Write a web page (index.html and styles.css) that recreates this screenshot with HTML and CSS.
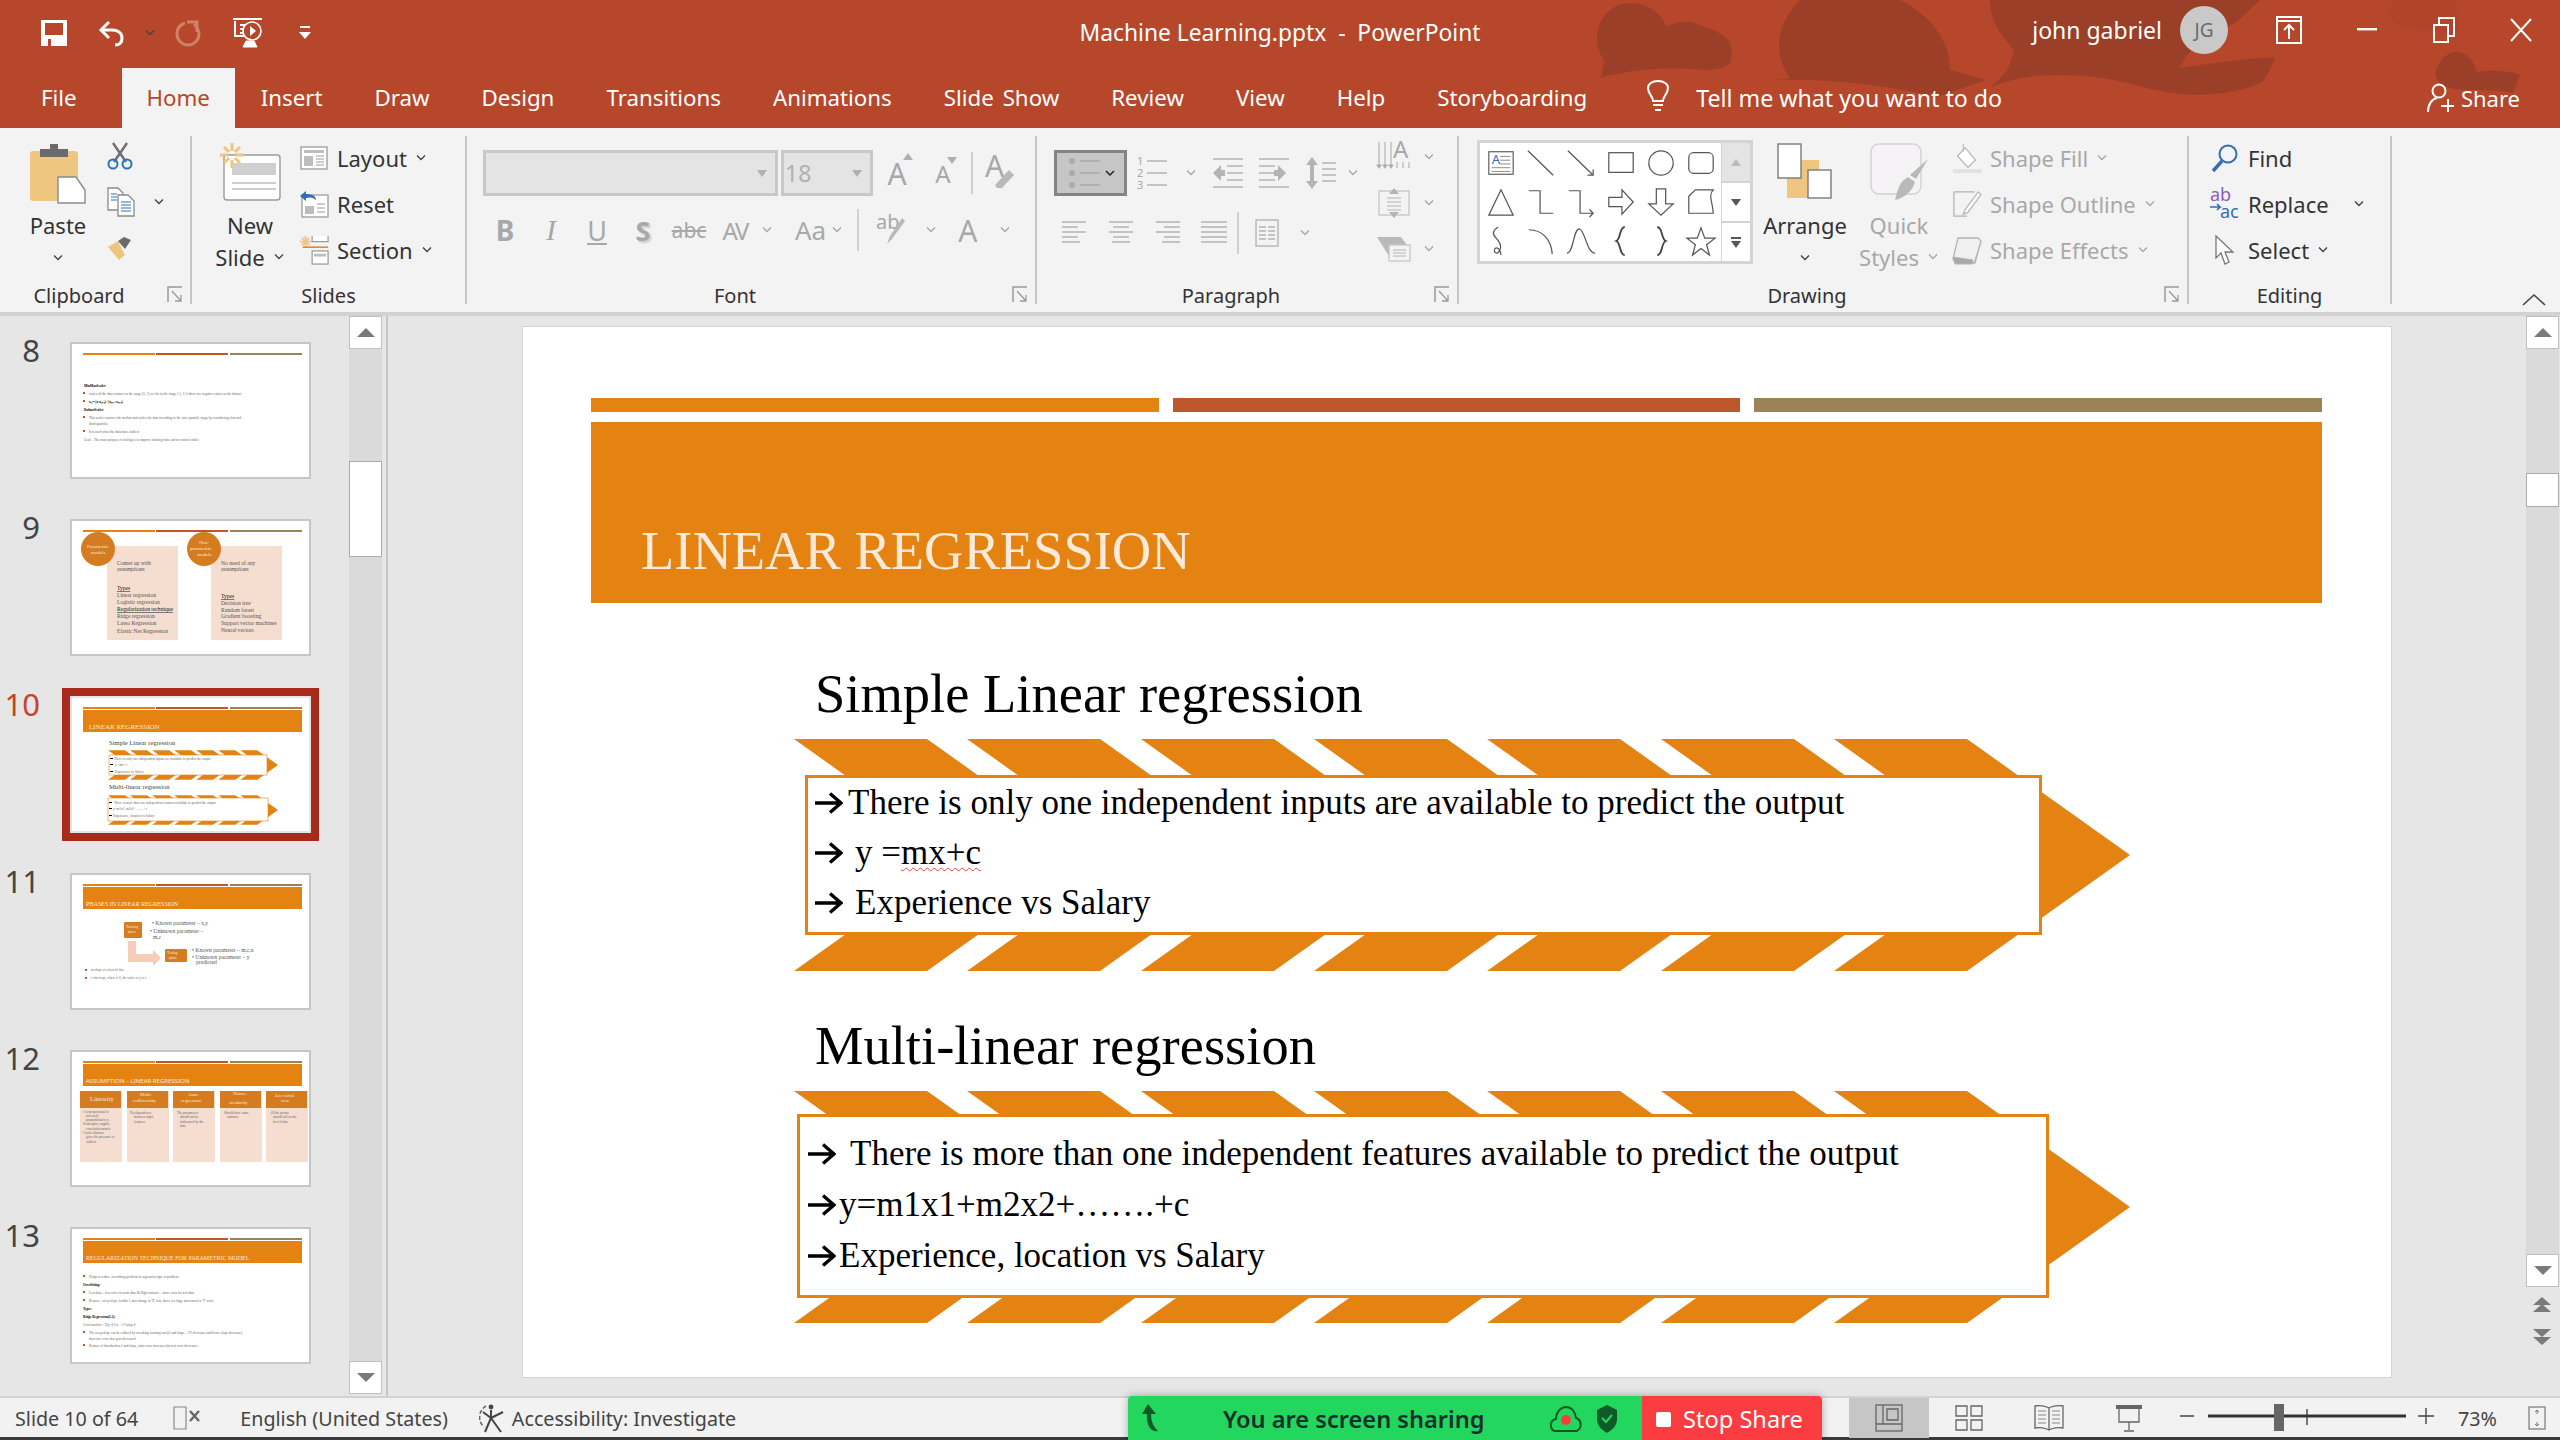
FILE: index.html
```html
<!DOCTYPE html>
<html lang="en">
<head>
  <meta charset="UTF-8">
  <title>Machine Learning.pptx - PowerPoint</title>
  <link rel="stylesheet" href="styles.css">
</head>
<body>
<svg class="defs">
  <symbol id="caret" viewBox="0 0 12 8"><path d="M2 1.5l4 4 4-4" fill="none" stroke="currentColor" stroke-width="1.4"/></symbol>
  <symbol id="launcher" viewBox="0 0 16 18"><path d="M1 16V1h14" fill="none" stroke="#9a9a9a" stroke-width="1.5"/><path d="M5 5l9 10M14 9v6H8" fill="none" stroke="#9a9a9a" stroke-width="1.3"/></symbol>
  <symbol id="chevrons" viewBox="0 0 1336 232">
    <g fill="#e48312">
      <path d="M0 0h133l163 116-163 116H0l163-116z"/>
      <path d="M173 0h133l163 116-163 116H173l163-116z"/>
      <path d="M347 0h133l163 116-163 116H347l163-116z"/>
      <path d="M520 0h133l163 116-163 116H520l163-116z"/>
      <path d="M693 0h133l163 116-163 116H693l163-116z"/>
      <path d="M867 0h133l163 116-163 116H867l163-116z"/>
      <path d="M1040 0h133l163 116-163 116h-133l163-116z"/>
    </g>
  </symbol>
  <symbol id="accents" viewBox="0 0 237 4">
    <path d="M11 0h72v2H11z" fill="#e48312"/><path d="M84 0h72v2H84z" fill="#bd582c"/><path d="M158 0h72v2h-72z" fill="#9b8357"/>
  </symbol>
  <symbol id="sarrow" viewBox="0 0 28 22"><path d="M0 11h24M15 1.5L26 11 15 20.5" fill="none" stroke="#000" stroke-width="3.4"/></symbol>
</svg>

<header class="titlebar">
  <svg class="art" viewBox="0 0 2560 128">
    <g fill="#9c3f28">
      <path d="M1597 40c-1-20 14-38 35-37 17 1 29 10 35 24 10-6 24-7 32-2 16 4 28 12 31 18 2 8 2 14 0 20-6 5-14 7-24 7-20-2-44-2-64 0-14 2-28 4-42 8 2-6 4-12 4-18-4-6-7-12-7-20z"/>
      <path d="M1800 0c-20 20-30 50-10 78l-21 2c60-2 120 5 168 17l49-17-36-10c0-30-20-55-50-70z"/>
      <path d="M1990 0c0 20 10 34 24 50-2 8-4 14-7 20-4 6-10 12-17 17 22-8 44-12 66-12 24 0 48 2 71 8 24 6 46 12 70 12 28-1 58-6 67-15 5-8 9-16 11-23-32 2-64 6-96 11 6-10 12-18 18-25 14-8 30-14 42-23l21-20z"/>
      <path d="M2435 73c3-10 10-21 21-21 12 0 18 10 21 20 14-2 32-2 43 3l-7 18c-16-3-34-3-50-3-10-1-18-3-24-7z"/>
      <path d="M2386 10c4-4 6-7 8-10h60c4 12 6 24 4 32-8 6-18 2-28-2-14 0-28 0-36-8z" opacity=".18"/>
    </g>
  </svg>
  <div class="title-row">
    <div class="qat">
      <svg class="qat-save" width="26" height="26" viewBox="0 0 26 26"><path d="M0 0h26v26H0z" fill="#fff"/><path d="M4 3h18v12H4zM7 19h3v7H7z" fill="#b7472a"/></svg>
      <svg class="qat-undo" width="28" height="28" viewBox="0 0 28 28"><path d="M11 3L3 11l8 8" fill="none" stroke="#fff" stroke-width="3"/><path d="M4 11h10c6 0 10 3 10 8s-3 7-7 7" fill="none" stroke="#fff" stroke-width="3"/></svg>
      <svg class="caret qat-caret"><use href="#caret"/></svg>
      <svg class="qat-redo" width="28" height="28" viewBox="0 0 28 28"><path d="M11 4C5 6 3 11 3 15c0 6 5 11 11 11s11-5 11-11c0-4-2-7-5-10" fill="none" stroke="#d2806a" stroke-width="3"/><path d="M13 3h10v10" fill="none" stroke="#d2806a" stroke-width="3"/></svg>
      <svg class="qat-show" width="30" height="30" viewBox="0 0 30 30"><path d="M0 1h29M2 3v15h12M7 7h6M7 11h6M7 15h5" fill="none" stroke="#fff" stroke-width="2"/><circle cx="19" cy="13" r="9" fill="#b7472a" stroke="#fff" stroke-width="1.6"/><path d="M17 8l6 5-6 5z" fill="#fff"/><path d="M10 29h14l-3-6h-8zM17 20v5" fill="#fff" stroke="#fff"/></svg>
      <svg class="qat-more" width="12" height="14" viewBox="0 0 12 14"><path d="M1 0h10v2H1zM0 6h12l-6 7z" fill="#fff"/></svg>
    </div>
    <div class="doc-title">Machine Learning.pptx&nbsp; -&nbsp; PowerPoint</div>
    <div class="account">
      <span class="user">john gabriel</span>
      <span class="avatar">JG</span>
      <svg class="win win-ribbon" width="26" height="28" viewBox="0 0 26 28"><path d="M1 1h24v26H1zM1 5h24" fill="none" stroke="#fff" stroke-width="2"/><path d="M13 23V10M8 14l5-5 5 5" fill="none" stroke="#fff" stroke-width="2"/></svg>
      <svg class="win win-min" width="20" height="4" viewBox="0 0 20 4"><path d="M0 0h20v2.4H0z" fill="#fff"/></svg>
      <svg class="win win-max" width="22" height="26" viewBox="0 0 22 26"><path d="M1 8h14v17H1z" fill="none" stroke="#fff" stroke-width="2"/><path d="M6 7V1h15v18h-5" fill="none" stroke="#fff" stroke-width="2"/></svg>
      <svg class="win win-close" width="22" height="24" viewBox="0 0 22 24"><path d="M1 1l20 22M21 1L1 23" fill="none" stroke="#fff" stroke-width="2"/></svg>
    </div>
  </div>
  <nav class="tabs">
    <span class="tab tab-file">File</span>
    <span class="tab active">Home</span>
    <span class="tab">Insert</span>
    <span class="tab">Draw</span>
    <span class="tab">Design</span>
    <span class="tab">Transitions</span>
    <span class="tab">Animations</span>
    <span class="tab tab-show">Slide Show</span>
    <span class="tab">Review</span>
    <span class="tab">View</span>
    <span class="tab">Help</span>
    <span class="tab">Storyboarding</span>
    <svg class="bulb" width="24" height="32" viewBox="0 0 24 32"><path d="M7 21c0-5-5-7-5-13C2 4 6 1 12 1s10 3 10 7c0 6-5 8-5 13z" fill="none" stroke="#fff" stroke-width="2"/><path d="M7 24h10v2H7zM9 29h6v2H9z" fill="#fff"/></svg>
    <span class="tell">Tell me what you want to do</span>
    <span class="share">
      <svg width="28" height="30" viewBox="0 0 28 30"><circle cx="12" cy="8" r="6.5" fill="none" stroke="#fff" stroke-width="2"/><path d="M1 29c0-8 4-13 9-14" fill="none" stroke="#fff" stroke-width="2"/><path d="M14 23h13M21 16v13" stroke="#fff" stroke-width="2"/></svg>
      Share
    </span>
  </nav>
</header>

<section class="ribbon">
  <div class="group g-clipboard">
    <div class="group-body">
      <div class="large paste">
        <div class="large-icon">
          <svg width="56" height="60" viewBox="0 0 56 60"><rect x="0" y="8" width="48" height="50" rx="3" fill="#efc67f"/><path d="M10 14V6h10V1h8v5h10v8z" fill="#6b6b6b"/><path d="M28 34h18l9 13v13H28z" fill="#fff" stroke="#8a8a8a" stroke-width="1.4"/></svg>
        </div>
        <span>Paste</span>
        <svg class="caret"><use href="#caret"/></svg>
      </div>
      <div class="stack clip-tools">
        <div class="row">
          <svg width="26" height="28" viewBox="0 0 26 28"><path d="M6 1l13 19M20 1L7 20" stroke="#6e6e6e" stroke-width="2.4"/><circle cx="6" cy="22" r="4.5" fill="none" stroke="#2b73b8" stroke-width="2"/><circle cx="20" cy="22" r="4.5" fill="none" stroke="#2b73b8" stroke-width="2"/></svg>
        </div>
        <div class="row">
          <svg width="28" height="30" viewBox="0 0 28 30"><path d="M1 1h10l5 5v17H1z" fill="#fff" stroke="#8a8a8a" stroke-width="1.3"/><path d="M11 8h10l6 6v15H11z" fill="#fff" stroke="#8a8a8a" stroke-width="1.3"/><path d="M14 15h10M14 18h10M14 21h10M14 24h10M4 7h6M4 10h6M4 13h6" stroke="#2b73b8" stroke-width="1.2"/></svg>
          <svg class="caret clip-caret"><use href="#caret"/></svg>
        </div>
        <div class="row">
          <svg width="26" height="24" viewBox="0 0 26 24"><path d="M1 11l10-6 7 14-6 5z" fill="#efc67f"/><path d="M11 5l6-4 7 3-6 9z" fill="#6b6b6b"/></svg>
        </div>
      </div>
    </div>
    <div class="group-label"><span>Clipboard</span><svg class="launcher"><use href="#launcher"/></svg></div>
  </div>

  <div class="group g-slides">
    <div class="group-body">
      <div class="large new-slide">
        <div class="large-icon">
          <svg width="62" height="58" viewBox="0 0 62 58"><rect x="5" y="12" width="56" height="45" rx="3" fill="#fff" stroke="#9a9a9a" stroke-width="1.4"/><path d="M13 20h44v12H13z" fill="#cfcfcf"/><path d="M13 40h44M13 46h44" stroke="#bdbdbd" stroke-width="1.4"/><g stroke="#efc67f" stroke-width="3"><path d="M13 0v8M13 17v8M1 12h8M17 12h8M5 4l5 5M21 4l-5 5M5 20l5-5M21 20l-5-5"/></g></svg>
        </div>
        <span>New</span>
        <span>Slide <svg class="caret"><use href="#caret"/></svg></span>
      </div>
      <div class="stack">
        <div class="row">
          <svg class="r-icon" width="28" height="24" viewBox="0 0 28 24"><rect x="1" y="1" width="26" height="22" fill="#fff" stroke="#9a9a9a" stroke-width="1.3"/><path d="M4 4h20v3H4zM4 10h9v10H4z" fill="#bdbdbd"/><path d="M16 10h8M16 13h8M16 16h8M16 19h8" stroke="#9a9a9a"/></svg>
          <span>Layout</span><svg class="caret"><use href="#caret"/></svg>
        </div>
        <div class="row">
          <svg class="r-icon" width="30" height="28" viewBox="0 0 30 28"><rect x="3" y="5" width="26" height="22" fill="#fff" stroke="#9a9a9a" stroke-width="1.3"/><path d="M6 16h9v8H6z" fill="#bdbdbd"/><path d="M18 14h8M18 18h8M18 22h8" stroke="#9a9a9a"/><path d="M1 6l6-5v3c6 0 10 2 10 6-3-3-6-3-10-2v3z" fill="#2f6fb3"/></svg>
          <span>Reset</span>
        </div>
        <div class="row">
          <svg class="r-icon" width="32" height="32" viewBox="0 0 32 32"><g stroke="#efc67f" stroke-width="2"><path d="M7 1v12M1 7h12M3 3l8 8M11 3l-8 8"/></g><path d="M14 1v6h17V1" fill="#fff" stroke="#9a9a9a" stroke-width="1.3"/><path d="M4 13h27" stroke="#e48312" stroke-width="1.6"/><rect x="14" y="17" width="17" height="14" fill="#fff" stroke="#9a9a9a" stroke-width="1.3"/><path d="M16 20h13v3H16z" fill="#bdbdbd"/></svg>
          <span>Section</span><svg class="caret"><use href="#caret"/></svg>
        </div>
      </div>
    </div>
    <div class="group-label plain"><span>Slides</span></div>
  </div>

  <div class="group g-font">
    <div class="group-body column">
      <div class="font-row1 disabled">
        <div class="combo combo-name"><i class="down"></i></div>
        <div class="combo combo-size">18<i class="down"></i></div>
        <span class="cell c48 grow">A<i class="up"></i></span>
        <span class="cell c48 shrink">A<i class="down small"></i></span>
        <span class="vsep short"></span>
        <svg class="eraser" width="30" height="32" viewBox="0 0 30 32"><text x="0" y="20" class="erase-a">A</text><path d="M10 28l14-15 5 5-12 13h-5z" fill="#b9b9b9"/></svg>
      </div>
      <div class="font-row2 disabled">
        <span class="cell c46 btn-b">B</span>
        <span class="cell c46 btn-i">I</span>
        <span class="cell c46 btn-u">U</span>
        <span class="cell c46 btn-s">S</span>
        <span class="cell c46 btn-abc">abc</span>
        <span class="cell c46 btn-av">AV</span>
        <svg class="caret c-av"><use href="#caret"/></svg>
        <span class="cell btn-aa">Aa</span>
        <svg class="caret c-aa"><use href="#caret"/></svg>
        <span class="vsep sep-aa"></span>
        <svg class="pen" width="30" height="30" viewBox="0 0 30 30"><text x="0" y="14" class="pen-ab">ab</text><path d="M14 21L26 3l3 3-13 18-5 5z" fill="#b9b9b9"/></svg>
        <svg class="caret c-pen"><use href="#caret"/></svg>
        <span class="cell btn-color">A</span>
        <svg class="caret c-color"><use href="#caret"/></svg>
      </div>
    </div>
    <div class="group-label"><span>Font</span><svg class="launcher"><use href="#launcher"/></svg></div>
  </div>

  <div class="group g-para">
    <div class="group-body">
      <div class="para-left disabled">
        <div class="para-row1">
          <div class="bullets"><svg width="46" height="34" viewBox="0 0 46 34"><g fill="#aaa"><circle cx="4" cy="5" r="3"/><circle cx="4" cy="17" r="3"/><circle cx="4" cy="29" r="3"/></g><path d="M12 5h20M12 17h20M12 29h20" stroke="#aaa" stroke-width="1.5"/><path d="M38 15l4 4 4-4" fill="none" stroke="#222" stroke-width="1.5"/></svg></div>
          <span class="cell"><svg width="30" height="34" viewBox="0 0 30 34"><path d="M10 5h20M10 17h20M10 29h20" stroke="#b4b4b4" stroke-width="1.5"/><text x="0" y="9" class="num">1</text><text x="0" y="21" class="num">2</text><text x="0" y="33" class="num">3</text></svg></span>
          <span class="cell"><svg class="caret"><use href="#caret"/></svg></span>
          <span class="cell"><svg width="30" height="32" viewBox="0 0 30 32"><path d="M0 2h30M14 9h16M14 16h16M14 23h16M0 30h30" stroke="#b4b4b4" stroke-width="1.5"/><path d="M0 16l8-8v5h4v6H8v5z" fill="#b4b4b4"/></svg></span>
          <span class="cell"><svg width="30" height="32" viewBox="0 0 30 32"><path d="M0 2h30M0 9h16M0 16h16M0 23h16M0 30h30" stroke="#b4b4b4" stroke-width="1.5"/><path d="M30 16l-8-8v5h-4v6h4v5z" transform="translate(-3)" fill="#b4b4b4"/></svg></span>
          <span class="cell"><svg width="30" height="32" viewBox="0 0 30 32"><path d="M6 0l6 8H8v16h4l-6 8-6-8h4V8H0z" fill="#b4b4b4"/><path d="M16 6h14M16 12h14M16 18h14M16 24h14" stroke="#b4b4b4" stroke-width="1.5"/></svg></span>
          <span class="cell"><svg class="caret"><use href="#caret"/></svg></span>
        </div>
        <div class="para-row2">
          <span class="cell"><svg width="26" height="24" viewBox="0 0 26 24"><path d="M0 1h24M0 6h16M0 11h24M0 16h16M0 21h18" stroke="#b4b4b4" stroke-width="1.5"/></svg></span>
          <span class="cell"><svg width="26" height="24" viewBox="0 0 26 24"><path d="M1 1h24M5 6h16M1 11h24M5 16h16M4 21h18" stroke="#b4b4b4" stroke-width="1.5"/></svg></span>
          <span class="cell"><svg width="26" height="24" viewBox="0 0 26 24"><path d="M2 1h24M10 6h16M2 11h24M10 16h16M8 21h18" stroke="#b4b4b4" stroke-width="1.5"/></svg></span>
          <span class="cell"><svg width="26" height="24" viewBox="0 0 26 24"><path d="M0 1h26M0 6h26M0 11h26M0 16h26M0 21h26" stroke="#b4b4b4" stroke-width="1.5"/></svg></span>
          <span class="vsep"></span>
          <span class="cell"><svg width="24" height="28" viewBox="0 0 24 28"><rect x="1" y="1" width="22" height="26" fill="none" stroke="#b4b4b4" stroke-width="1.4"/><path d="M4 8h7M13 8h7M4 12h7M13 12h7M4 16h7M13 16h7M4 20h7M13 20h7" stroke="#b4b4b4" stroke-width="1.3"/></svg></span>
          <span class="cell"><svg class="caret"><use href="#caret"/></svg></span>
        </div>
      </div>
      <div class="stack para-right disabled">
        <div class="row"><svg width="34" height="34" viewBox="0 0 34 34"><path d="M2 2v26M8 2v26M14 2v26M2 28l-2-3h4zM8 28l-2-3h4zM14 28l-2-3h4zM20 22v6M26 22v6M32 22v6" stroke="#b4b4b4" stroke-width="1.2"/><text x="16" y="18" class="big-a">A</text></svg><svg class="caret"><use href="#caret"/></svg></div>
        <div class="row"><svg width="34" height="32" viewBox="0 0 34 32"><rect x="2" y="4" width="30" height="24" fill="none" stroke="#c9c3d0" stroke-width="1.4"/><path d="M10 11h14M10 15h14M10 19h14M10 23h14" stroke="#b4b4b4"/><path d="M17 1l-5 6h10zM17 31l-5-6h10z" fill="#b4b4b4"/></svg><svg class="caret"><use href="#caret"/></svg></div>
        <div class="row"><svg width="34" height="26" viewBox="0 0 34 26"><path d="M0 1h24l6 8H14v14z" fill="#b9b9b9"/><rect x="12" y="9" width="21" height="16" fill="#f3f3f3" stroke="#c9c3d0" stroke-width="1.3"/><path d="M16 14h13M16 17h13M16 20h13" stroke="#b4b4b4"/></svg><svg class="caret"><use href="#caret"/></svg></div>
      </div>
    </div>
    <div class="group-label"><span>Paragraph</span><svg class="launcher"><use href="#launcher"/></svg></div>
  </div>

  <div class="group g-drawing">
    <div class="group-body">
      <div class="gallery">
        <div class="shapes">
          <svg viewBox="0 0 32 32"><rect x="3" y="4" width="26" height="24" fill="#fff" stroke="#555" stroke-width="1.2"/><text x="6" y="17" class="ga">A</text><path d="M15 9h11M15 13h11M15 17h11M6 21h20M6 25h20" stroke="#888"/></svg>
          <svg viewBox="0 0 32 32"><path d="M2 3l27 26" stroke="#555" stroke-width="1.3"/></svg>
          <svg viewBox="0 0 32 32"><path d="M2 3l26 25M23 29h6v-6" fill="none" stroke="#555" stroke-width="1.3"/></svg>
          <svg viewBox="0 0 32 32"><rect x="3" y="5" width="26" height="21" fill="none" stroke="#555" stroke-width="1.3"/></svg>
          <svg viewBox="0 0 32 32"><circle cx="16" cy="16" r="13" fill="none" stroke="#555" stroke-width="1.3"/></svg>
          <svg viewBox="0 0 32 32"><rect x="3" y="5" width="26" height="22" rx="5" fill="none" stroke="#555" stroke-width="1.3"/></svg>
          <svg viewBox="0 0 32 32"><path d="M16 3L3 30h26z" fill="none" stroke="#555" stroke-width="1.3"/></svg>
          <svg viewBox="0 0 32 32"><path d="M3 4h12v24h14" fill="none" stroke="#555" stroke-width="1.3"/></svg>
          <svg viewBox="0 0 32 32"><path d="M3 4h12v24h14M25 24l4 4-4 4" fill="none" stroke="#555" stroke-width="1.3"/></svg>
          <svg viewBox="0 0 32 32"><path d="M3 11h14V3l12 13-12 13v-8H3z" fill="none" stroke="#555" stroke-width="1.3"/></svg>
          <svg viewBox="0 0 32 32"><path d="M11 2h10v16h8L16 30 3 18h8z" fill="none" stroke="#555" stroke-width="1.3"/></svg>
          <svg viewBox="0 0 32 32"><path d="M10 3h19c-6 6 0 14 0 25H3V10z" fill="none" stroke="#555" stroke-width="1.3"/></svg>
          <svg viewBox="0 0 32 32"><path d="M13 1c-5 3-7 7-3 11s7 8 5 13-6 5-6 1 6-4 7 5" fill="none" stroke="#555" stroke-width="1.3"/></svg>
          <svg viewBox="0 0 32 32"><path d="M3 4c14 0 24 10 25 26" fill="none" stroke="#555" stroke-width="1.3"/></svg>
          <svg viewBox="0 0 32 32"><path d="M1 29C8 29 8 3 14 3s8 26 17 26" fill="none" stroke="#555" stroke-width="1.3"/></svg>
          <svg viewBox="0 0 32 32"><path d="M20 1c-6 0-4 13-9 15 5 2 3 15 9 15" fill="none" stroke="#444" stroke-width="2"/></svg>
          <svg viewBox="0 0 32 32"><path d="M12 1c6 0 4 13 9 15-5 2-3 15-9 15" fill="none" stroke="#444" stroke-width="2"/></svg>
          <svg viewBox="0 0 32 32"><path d="M16 2l4 11h11l-9 7 3 11-9-7-9 7 3-11-9-7h11z" fill="none" stroke="#555" stroke-width="1.3"/></svg>
        </div>
        <div class="gal-scroll">
          <div class="gal-btn off"><i class="up grey"></i></div>
          <div class="gal-btn"><i class="down dark"></i></div>
          <div class="gal-btn more"><b></b><i class="down dark"></i></div>
        </div>
      </div>
      <div class="large arrange">
        <div class="large-icon">
          <svg width="56" height="56" viewBox="0 0 56 56"><path d="M10 17h32v38H10z" fill="#efc67f"/><rect x="1" y="1" width="23" height="34" fill="#fff" stroke="#7a7a7a" stroke-width="1.4"/><rect x="31" y="27" width="23" height="28" fill="#fff" stroke="#7a7a7a" stroke-width="1.4"/></svg>
        </div>
        <span>Arrange</span>
        <svg class="caret"><use href="#caret"/></svg>
      </div>
      <div class="large quick disabled-text">
        <div class="large-icon">
          <svg width="58" height="58" viewBox="0 0 58 58"><rect x="1" y="1" width="50" height="50" rx="8" fill="#f6f3f7" stroke="#d4d0d6" stroke-width="1.4"/><path d="M58 16L46 36l-6-4z" fill="#b9b9b9"/><path d="M38 34l7 5c-2 8-10 16-20 18 2-6 3-18 13-23z" fill="#b9b9b9"/></svg>
        </div>
        <span>Quick</span>
        <span>Styles <svg class="caret"><use href="#caret"/></svg></span>
      </div>
      <div class="stack shape-tools disabled-text">
        <div class="row">
          <svg class="r-icon" width="32" height="32" viewBox="0 0 32 32"><path d="M6 14L14 5l11 13-8 8z" fill="#fff" stroke="#b4b4b4" stroke-width="1.3"/><path d="M12 1v8" stroke="#b4b4b4"/><path d="M1 28h31v4H1z" fill="#e2e2e2"/></svg>
          <span>Shape Fill</span><svg class="caret"><use href="#caret"/></svg>
        </div>
        <div class="row">
          <svg class="r-icon" width="32" height="28" viewBox="0 0 32 28"><path d="M2 1h22M2 1v26h14" fill="none" stroke="#b4b4b4" stroke-width="1.3"/><path d="M14 20L28 1l3 3-14 19-5 2z" fill="#fff" stroke="#b4b4b4" stroke-width="1.3"/></svg>
          <span>Shape Outline</span><svg class="caret"><use href="#caret"/></svg>
        </div>
        <div class="row">
          <svg class="r-icon" width="30" height="28" viewBox="0 0 30 28"><path d="M6 2h20l3 3-6 22H4L1 23z" fill="#f0f0f0" stroke="#b4b4b4" stroke-width="1.3"/><path d="M1 21l20 3-1 4H3zM22 27l7-21" fill="#a9a9a9" stroke="#b4b4b4"/></svg>
          <span>Shape Effects</span><svg class="caret"><use href="#caret"/></svg>
        </div>
      </div>
    </div>
    <div class="group-label"><span>Drawing</span><svg class="launcher"><use href="#launcher"/></svg></div>
  </div>

  <div class="group g-editing">
    <div class="group-body">
      <div class="stack">
        <div class="row">
          <svg class="r-icon" width="28" height="28" viewBox="0 0 28 28"><circle cx="17" cy="10" r="8.5" fill="none" stroke="#2f6fb3" stroke-width="2"/><path d="M11 17L2 27" stroke="#2f6fb3" stroke-width="3.4"/></svg>
          <span>Find</span>
        </div>
        <div class="row">
          <svg class="r-icon" width="30" height="32" viewBox="0 0 30 32"><text x="0" y="13" class="rep-ab">ab</text><path d="M0 19h10l-3-3M10 19l-3 3" fill="none" stroke="#2f6fb3" stroke-width="1.6"/><text x="10" y="30" class="rep-ac">ac</text></svg>
          <span>Replace</span><svg class="caret rep-caret"><use href="#caret"/></svg>
        </div>
        <div class="row">
          <svg class="r-icon" width="22" height="30" viewBox="0 0 22 30"><path d="M2 1v22l5-5 4 11 4-2-4-10h8z" fill="#fff" stroke="#777" stroke-width="1.3"/></svg>
          <span>Select</span><svg class="caret"><use href="#caret"/></svg>
        </div>
      </div>
    </div>
    <div class="group-label plain"><span>Editing</span></div>
  </div>

  <svg class="collapse" width="24" height="14" viewBox="0 0 24 14"><path d="M1 12L12 2l11 10" fill="none" stroke="#444" stroke-width="1.6"/></svg>
</section>

<main class="workspace">
  <aside class="thumbs">
    <div class="thumb-list">
      <div class="thumb-row"><span class="thumb-num">8</span>
        <svg class="thumb" viewBox="0 0 237 133">
          <use href="#accents" y="9" width="237" height="4"/>
          <g class="mini">
            <text x="12" y="43" class="b">MinMaxScaler</text>
            <text x="17" y="51">scales all the data features in the range [0, 1] or else in the range [-1, 1] if there are negative values in the dataset</text>
            <text x="17" y="59" class="b">xₙ = (x-xₘᵢₙ) / (xₘₐₓ-xₘᵢₙ)</text>
            <text x="12" y="67" class="b">RobustScaler</text>
            <text x="17" y="75">This scaler removes the median and scales the data according to the inter quantile range by considering first and</text>
            <text x="17" y="81">third quartiles</text>
            <text x="17" y="89">It is used when the data have outliers</text>
            <text x="12" y="97">Goal – The main purpose of scaling is to improve training time and to control outlier</text>
          </g>
          <g fill="#bd582c"><rect x="11" y="48" width="2" height="2"/><rect x="11" y="56" width="2" height="2"/><rect x="11" y="72" width="2" height="2"/><rect x="11" y="86" width="2" height="2"/></g>
        </svg>
      </div>
      <div class="thumb-row"><span class="thumb-num">9</span>
        <svg class="thumb" viewBox="0 0 237 133">
          <use href="#accents" y="9" width="237" height="4"/>
          <rect x="35" y="25" width="71" height="94" fill="#f5ddd0"/>
          <rect x="139" y="25" width="71" height="94" fill="#f5ddd0"/>
          <circle cx="26" cy="28" r="17" fill="#d47c1f"/>
          <circle cx="132" cy="28" r="17" fill="#d47c1f"/>
          <g class="mini lg">
            <text x="15" y="27" class="w">Parametric</text><text x="19" y="33" class="w">models</text>
            <text x="127" y="23" class="w">Non-</text><text x="118" y="29" class="w">parametric</text><text x="125" y="35" class="w">models</text>
            <text x="45" y="44">Comes up with</text><text x="45" y="50">assumptions</text>
            <text x="45" y="69" class="u">Types</text>
            <text x="45" y="76">Linear regression</text><text x="45" y="83">Logistic regression</text><text x="45" y="90" class="u">Regularization technique</text>
            <text x="45" y="97">Ridge regression</text><text x="45" y="104">Lasso Regression</text><text x="45" y="112">Elastic Net Regression</text>
            <text x="149" y="44">No need of any</text><text x="149" y="50">assumptions</text>
            <text x="149" y="77" class="u">Types</text>
            <text x="149" y="84">Decision tree</text><text x="149" y="91">Random forest</text><text x="149" y="97">Gradient boosting</text><text x="149" y="104">Support vector machines</text><text x="149" y="111">Neural vectors</text>
          </g>
        </svg>
      </div>
      <div class="thumb-row current"><span class="thumb-num">10</span>
        <svg class="thumb" viewBox="0 0 237 133">
          <use href="#accents" y="9" width="237" height="4"/>
          <rect x="11" y="12" width="219" height="22" fill="#e48312"/>
          <text x="17" y="31" class="mini-title">LINEAR REGRESSION</text>
          <text x="37" y="47" class="mini-head">Simple Linear regression</text>
          <use href="#chevrons" x="36" y="52" width="170" height="30"/>
          <rect x="37" y="57" width="158" height="20" fill="#fff" stroke="#e48312" stroke-width=".6"/>
          <g class="mini"><text x="42" y="62">There is only one independent inputs are available to predict the output</text><text x="43" y="68">y =mx+c</text><text x="43" y="75">Experience vs Salary</text></g>
          <text x="37" y="91" class="mini-head">Multi-linear regression</text>
          <use href="#chevrons" x="36" y="97" width="170" height="30"/>
          <rect x="36" y="100" width="160" height="23" fill="#fff" stroke="#e48312" stroke-width=".6"/>
          <g class="mini"><text x="42" y="106">There is more than one independent features available to predict the output</text><text x="41" y="112">y=m1x1+m2x2+…….+c</text><text x="41" y="119">Experience, location vs Salary</text></g>
          <g fill="#000"><rect x="38" y="60" width="3" height="1"/><rect x="38" y="66" width="3" height="1"/><rect x="38" y="73" width="3" height="1"/><rect x="37" y="104" width="3" height="1"/><rect x="37" y="110" width="3" height="1"/><rect x="37" y="117" width="3" height="1"/></g>
        </svg>
      </div>
      <div class="thumb-row"><span class="thumb-num">11</span>
        <svg class="thumb" viewBox="0 0 237 133">
          <use href="#accents" y="9" width="237" height="4"/>
          <rect x="11" y="12" width="219" height="22" fill="#e48312"/>
          <text x="14" y="31" class="mini-title sm">PHASES IN LINEAR REGRESSION</text>
          <g transform="translate(0 3)">
          <rect x="52" y="44" width="18" height="16" rx="1" fill="#d47c1f"/>
          <rect x="93" y="71" width="22" height="13" rx="1" fill="#d47c1f"/>
          <path d="M56 63h8v13h17v-4l8 8-8 8v-4H56z" fill="#f5cdb8"/>
          <g class="mini lg">
            <text x="54" y="50" class="w xs">Training</text><text x="56" y="55" class="w xs">phase</text>
            <text x="95" y="76" class="w xs">Testing</text><text x="97" y="81" class="w xs">phase</text>
            <text x="80" y="47">• Known parameter – x,y</text><text x="78" y="55">• Unknown parameter –</text><text x="81" y="61">m,c</text>
            <text x="120" y="74">• Known parameter – m,c,x</text><text x="120" y="81">• Unknown parameter – y</text><text x="124" y="86">predicted</text>
          </g>
          <g class="mini"><text x="19" y="93">m-slope of a best fit line</text><text x="19" y="101">c-intercept, when x=0, the value of y is c</text></g>
          <g fill="#bd582c"><rect x="13" y="91" width="2" height="2"/><rect x="13" y="99" width="2" height="2"/></g>
          </g>
        </svg>
      </div>
      <div class="thumb-row"><span class="thumb-num">12</span>
        <svg class="thumb" viewBox="0 0 237 133">
          <use href="#accents" y="9" width="237" height="4"/>
          <rect x="11" y="12" width="219" height="22" fill="#e48312"/>
          <text x="14" y="31" class="mini-title sans">ASSUMPTION – LINEAR REGRESSION</text>
          <g transform="translate(0 2)">
          <g fill="#f5ddd0"><rect x="8" y="37" width="42" height="71"/><rect x="55" y="37" width="42" height="71"/><rect x="101" y="37" width="42" height="71"/><rect x="148" y="37" width="42" height="71"/><rect x="194" y="37" width="42" height="71"/></g>
          <g fill="#d47c1f"><rect x="8" y="37" width="41" height="17"/><rect x="55" y="37" width="41" height="17"/><rect x="101" y="37" width="41" height="17"/><rect x="148" y="37" width="41" height="17"/><rect x="194" y="37" width="41" height="17"/></g>
          <g class="mini lg">
            <text x="18" y="47" class="w md">Linearity</text>
            <text x="68" y="42" class="w">Multi</text><text x="61" y="48" class="w">collinearity</text>
            <text x="116" y="42" class="w">Auto</text><text x="109" y="48" class="w">regression</text>
            <text x="161" y="41" class="w">Homo</text><text x="157" y="50" class="w">scedacity</text>
            <text x="203" y="43" class="w xs">Zero residual</text><text x="209" y="48" class="w xs">mean</text>
          </g>
          <g class="mini"><text x="11" y="59">x is proportional or</text><text x="14" y="63">inversely</text><text x="14" y="67">proportional to y</text><text x="11" y="71">Scatterplot, seqplot,</text><text x="14" y="76">correlation matrix</text><text x="11" y="80">Cook's distance</text><text x="14" y="84">gives the presence of</text><text x="14" y="89">outliers</text>
            <text x="58" y="60">No dependency</text><text x="62" y="64">between input</text><text x="62" y="69">features</text>
            <text x="105" y="60">The parameters</text><text x="108" y="64">should not be</text><text x="108" y="69">influenced by the</text><text x="108" y="73">time</text>
            <text x="152" y="60">Should have same</text><text x="155" y="64">variance</text>
            <text x="198" y="60">All the points</text><text x="201" y="64">should fall on the</text><text x="201" y="69">best fit line</text></g>
          </g>
        </svg>
      </div>
      <div class="thumb-row"><span class="thumb-num">13</span>
        <svg class="thumb" viewBox="0 0 237 133">
          <use href="#accents" y="9" width="237" height="4"/>
          <rect x="11" y="12" width="219" height="22" fill="#e48312"/>
          <text x="14" y="31" class="mini-title sm">REGULARIZATION TECHNIQUE FOR PARAMETRIC MODEL</text>
          <g class="mini"><text x="17" y="49">Helps to reduce overfitting problem in regression type of problem.</text>
            <text x="11" y="57" class="b">Overfitting:</text>
            <text x="17" y="65">Less bias – less error for train data &amp; High variance – more error for test data</text>
            <text x="17" y="73">Reason – steep slope (within 1 unit change in 'X' axis, there is a huge movement in 'Y' axis)</text>
            <text x="11" y="81" class="b">Types</text><text x="11" y="89" class="b">Ridge Regression(L2):</text>
            <text x="11" y="97">Cost function = Σ(yᵢ-ŷᵢ)²/n + λ*(slope)²</text>
            <text x="17" y="105">The steep slope can be reduced by tweaking learning rate(λ) and slope – CF decreases and hence slope decreases,</text>
            <text x="17" y="111">therefore error also gets decreased.</text>
            <text x="17" y="118">Reason of Introduction λ and slope, train error increases but test error decreases.</text></g>
          <g fill="#bd582c"><rect x="11" y="46" width="2" height="2"/><rect x="11" y="62" width="2" height="2"/><rect x="11" y="70" width="2" height="2"/><rect x="11" y="102" width="2" height="2"/><rect x="11" y="115" width="2" height="2"/></g>
        </svg>
      </div>
    </div>
    <div class="vscroll left-scroll">
      <div class="sb-btn"><i class="up grey lg"></i></div>
      <div class="sb-thumb"></div>
      <div class="sb-btn end"><i class="down grey lg"></i></div>
    </div>
  </aside>

  <div class="editor">
    <article class="slide">
      <div class="accent-bars"><i class="a1"></i><i class="a2"></i><i class="a3"></i></div>
      <h1 class="slide-title">LINEAR REGRESSION</h1>

      <h2 class="block-head first">Simple Linear regression</h2>
      <div class="process">
        <svg class="process-bg"><use href="#chevrons"/></svg>
        <div class="process-box box-one">
          <div class="bp"><svg class="arrow"><use href="#sarrow"/></svg><span class="tight">There is only one independent inputs are available to predict the output</span></div>
          <div class="bp"><svg class="arrow"><use href="#sarrow"/></svg><span class="wide">y =<span class="squiggle">mx+c</span></span></div>
          <div class="bp"><svg class="arrow"><use href="#sarrow"/></svg><span class="wide">Experience vs Salary</span></div>
        </div>
      </div>

      <h2 class="block-head">Multi-linear regression</h2>
      <div class="process">
        <svg class="process-bg"><use href="#chevrons"/></svg>
        <div class="process-box box-two">
          <div class="bp"><svg class="arrow"><use href="#sarrow"/></svg><span class="wider">There is more than one independent features available to predict the output</span></div>
          <div class="bp"><svg class="arrow"><use href="#sarrow"/></svg><span class="flush">y=m1x1+m2x2+…….+c</span></div>
          <div class="bp"><svg class="arrow"><use href="#sarrow"/></svg><span class="flush">Experience, location vs Salary</span></div>
        </div>
      </div>
    </article>
  </div>

  <div class="vscroll right-scroll">
    <div class="sb-btn"><i class="up grey lg"></i></div>
    <div class="sb-thumb"></div>
    <div class="sb-btn end"><i class="down grey lg"></i></div>
    <div class="page-btns">
      <svg width="18" height="18" viewBox="0 0 18 18"><path d="M9 1l9 8H0zM9 8l9 8H0z" fill="#7a7a7a"/></svg>
      <svg width="18" height="18" viewBox="0 0 18 18"><path d="M9 9l9-8H0zM9 17l9-8H0z" fill="#7a7a7a"/></svg>
    </div>
  </div>
</main>

<footer class="statusbar">
  <span class="st-slide">Slide 10 of 64</span>
  <svg class="st-notes" width="30" height="24" viewBox="0 0 30 24"><path d="M1 1h12v22H1zM13 1v22" fill="none" stroke="#8a8a8a" stroke-width="1.2"/><path d="M17 5l9 10M26 5l-9 10" stroke="#666" stroke-width="2.4"/></svg>
  <span class="st-lang">English (United States)</span>
  <svg class="st-access" width="28" height="32" viewBox="0 0 28 32"><path d="M7 4A13 13 0 0 0 5 25" fill="none" stroke="#666" stroke-width="1.6" stroke-dasharray="4 2"/><circle cx="12" cy="5" r="2.4" fill="#444"/><path d="M12 8v8l-8-6M12 16l12-6M12 16l-6 14M12 16l10 14" fill="none" stroke="#444" stroke-width="2"/></svg>
  <span class="st-acc">Accessibility: Investigate</span>

  <div class="views">
    <span class="view on"><svg width="28" height="28" viewBox="0 0 28 28"><rect x="1" y="1" width="26" height="26" fill="none" stroke="#666" stroke-width="1.3"/><path d="M8 1v19H1M1 20h26M12 5h11v11H12z" fill="none" stroke="#666" stroke-width="1.3"/></svg></span>
    <span class="view"><svg width="28" height="28" viewBox="0 0 28 28"><path d="M1 2h11v10H1zM16 2h11v10H16zM1 16h11v10H1zM16 16h11v10H16z" fill="none" stroke="#666" stroke-width="1.3"/></svg></span>
    <span class="view"><svg width="30" height="28" viewBox="0 0 30 28"><path d="M15 4C12 2 5 1 1 2v22c4-1 11 0 14 2 3-2 10-3 14-2V2c-4-1-11 0-14 2zM15 4v22" fill="none" stroke="#666" stroke-width="1.3"/><path d="M4 7h8M4 11h8M4 15h8M4 19h8M18 7h8M18 11h8M18 15h8M18 19h8" stroke="#888"/></svg></span>
    <span class="view"><svg width="26" height="28" viewBox="0 0 26 28"><path d="M0 1h26v4H0z" fill="#666"/><path d="M3 5v13h20V5M13 18v8M8 27h10" fill="none" stroke="#666" stroke-width="1.3"/></svg></span>
  </div>
  <svg class="zoom-slider" width="265" height="28" viewBox="0 0 265 28"><path d="M5 12h14M33 12h198M243 12h16M251 4v16M132 5v16" fill="none" stroke="#444" stroke-width="1.4"/><path d="M33 10.5h198v3H33z" fill="#333"/><path d="M99 0h10v27H99z" fill="#666"/></svg>
  <span class="zoom-pct">73%</span>
  <svg class="st-fit" width="18" height="24" viewBox="0 0 18 24"><rect x="1" y="1" width="16" height="22" fill="none" stroke="#777" stroke-width="1.2"/><path d="M9 4v4M7 6l2-2 2 2M9 20v-4M7 18l2 2 2-2" fill="none" stroke="#777"/></svg>

  <div class="share-bar">
    <div class="share-green">
      <svg class="share-arrow" width="22" height="32" viewBox="0 0 22 32"><path d="M8 1l8 10h-5c0 8 3 13 7 17-8 2-12-8-11-17H2z" fill="#0f5a26"/></svg>
      <span class="share-text">You are screen sharing</span>
      <svg class="share-cloud" width="32" height="28" viewBox="0 0 32 28"><path d="M4 26c-5-3-4-11 2-12 0-7 5-12 10-12s9 4 10 11c6 2 6 10 1 13z" fill="none" stroke="#0f5a26" stroke-width="2"/><circle cx="16" cy="15" r="5" fill="#fb3d42"/></svg>
      <svg class="share-shield" width="22" height="28" viewBox="0 0 22 28"><path d="M11 0l10 5v9c0 7-5 11-10 14C6 25 1 21 1 14V5z" fill="#0f5a26"/><path d="M6 13l4 4 6-7" fill="none" stroke="#27d65f" stroke-width="2"/></svg>
    </div>
    <div class="share-red"><i class="stop"></i><span>Stop Share</span></div>
  </div>
</footer>
</body>
</html>
```
FILE: styles.css
```css
* { box-sizing: border-box; }
html, body { margin: 0; height: 100%; }
body {
  width: 2560px;
  height: 1440px;
  overflow: hidden;
  display: flex;
  flex-direction: column;
  font-family: "Noto Sans", "Open Sans", sans-serif;
  font-size: 22px;
  color: #333;
  background: #e6e6e6;
}
.defs { position: absolute; width: 0; height: 0; }
svg { flex: none; display: block; }
i { font-style: normal; }

/* title bar and tabs */
.titlebar {
  position: relative;
  height: 128px;
  flex: none;
  background: #b7472a;
  color: #fff;
}
.art { position: absolute; left: 0; top: 0; width: 2560px; height: 128px; }
.title-row {
  position: relative;
  height: 68px;
  display: grid;
  grid-template-columns: 1fr auto 1fr;
  align-items: start;
}
.qat { display: flex; align-items: center; height: 66px; padding-left: 41px; }
.qat-undo { margin-left: 31px; }
.qat-caret { margin-left: 18px; color: #fff; }
.qat-redo { margin-left: 18px; }
.qat-show { margin-left: 31px; }
.qat-more { margin-left: 36px; }
.doc-title { font-size: 22.8px; line-height: 66px; }
.account { display: flex; align-items: center; justify-content: flex-end; height: 60px; }
.user { font-size: 23px; }
.avatar {
  width: 48px;
  height: 48px;
  margin: 0 0 0 18px;
  border-radius: 50%;
  background: #c9c9c9;
  color: #6a6a6a;
  font-size: 19px;
  line-height: 48px;
  text-align: center;
}
.win-ribbon { margin-left: 48px; }
.win-min { margin-left: 55px; }
.win-max { margin-left: 56px; }
.win-close { margin: 0 28px 0 55px; }

.tabs { position: relative; display: flex; align-items: stretch; height: 60px; font-size: 22.3px; }
.tab { padding: 0 26px; line-height: 60px; white-space: nowrap; }
.tab-file { padding: 0 45px 0 41px; }
.tab-show { word-spacing: 3px; }
.tab.active { width: 113px; padding: 0; text-align: center; background: #f3f3f3; color: #b7472a; }
.bulb { margin: 12px 0 0 33px; }
.tell { margin-left: 26px; line-height: 60px; font-size: 23.2px; }
.share { display: flex; align-items: center; gap: 6px; margin-left: auto; padding-right: 40px; font-size: 22px; }

/* ribbon */
.ribbon {
  height: 188px;
  flex: none;
  display: flex;
  padding-top: 8px;
  background: #f3f3f3;
  border-bottom: 4px solid #d2d2d2;
  font-size: 22px;
  color: #333;
}
.ribbon svg { overflow: visible; }
.group {
  flex: none;
  height: 168px;
  display: flex;
  flex-direction: column;
  border-right: 2px solid #c6c6c6;
}
.g-clipboard { width: 192px; }
.g-slides { width: 275px; }
.g-font { width: 570px; }
.g-para { width: 422px; }
.g-drawing { width: 730px; }
.g-editing { width: 203px; }
.group-body { flex: 1; display: flex; min-height: 0; }
.group-body.column { flex-direction: column; }
.group-label { height: 24px; padding-top: 6px; display: flex; align-items: center; font-size: 20px; }
.group-label span { flex: 1; text-align: center; }
.launcher { width: 16px; height: 18px; margin: 0 7px 0 9px; }
.caret { width: 12px; height: 8px; color: #444; }

.large { display: flex; flex-direction: column; align-items: center; line-height: 32px; }
.large span { display: flex; align-items: center; gap: 8px; }
.large-icon { height: 73px; padding-top: 7px; flex: none; }
.large > .caret { margin-top: 13px; }
.paste { width: 70px; margin-left: 23px; }
.new-slide { width: 84px; margin-left: 16px; }
.stack { display: flex; flex-direction: column; margin-top: -1px; }
.row { display: flex; align-items: center; height: 46px; gap: 8px; }
.r-icon { width: 30px; }
.clip-tools { margin: -3px 0 0 14px; }
.clip-caret { margin-left: 10px; }
.g-slides .stack { margin-left: 7px; }

/* disabled font and paragraph controls */
.cell {
  flex: none;
  display: flex;
  align-items: center;
  justify-content: center;
  position: relative;
  color: #a8a8a8;
}
.c46 { width: 46px; }
.c48 { width: 48px; }
.combo {
  height: 46px;
  position: relative;
  background: #e4e4e4;
  border: 3px solid #c8c8c8;
  color: #b0b0b0;
  line-height: 40px;
  padding-left: 10px;
}
.combo-name { width: 295px; margin-left: 16px; }
.combo-size { width: 92px; margin-left: 3px; padding-left: 1px; font-size: 23px; }
.down, .up {
  display: inline-block;
  width: 0;
  height: 0;
  border-left: 5px solid transparent;
  border-right: 5px solid transparent;
}
.down { border-top: 7px solid #b0b0b0; }
.up { border-bottom: 7px solid #b0b0b0; }
.combo .down { position: absolute; right: 8px; top: 17px; }
.font-row1 { display: flex; align-items: center; height: 46px; margin-top: 14px; }
.grow { font-size: 30px; }
.shrink { font-size: 24px; margin-left: -2px; }
.grow .up { position: absolute; right: 8px; top: 0; }
.shrink .down { position: absolute; right: 10px; top: 0; }
.vsep { display: block; flex: none; width: 2px; background: #d0d0d0; }
.short { height: 42px; margin-left: 4px; }
.eraser { margin-left: 12px; }
.erase-a { font-size: 30px; fill: #a8a8a8; }
.font-row2 { display: flex; align-items: center; height: 46px; margin-top: 11px; padding-left: 15px; }
.btn-b { font-weight: 700; font-size: 28px; }
.btn-i { font-family: "Liberation Serif", serif; font-style: italic; font-size: 30px; }
.btn-u { font-size: 27px; text-decoration: underline; }
.btn-s { font-weight: 700; font-size: 27px; text-shadow: 2px 2px 2px #ccc; }
.btn-abc { font-size: 21px; text-decoration: line-through; }
.btn-av { font-size: 24px; letter-spacing: -2px; }
.c-av { margin-left: 3px; color: #a8a8a8; }
.btn-aa { margin-left: 22px; font-size: 26px; }
.c-aa { margin-left: 5px; color: #a8a8a8; }
.sep-aa { height: 42px; margin-left: 14px; }
.pen { margin-left: 17px; }
.pen-ab { font-size: 20px; fill: #a8a8a8; }
.c-pen { margin-left: 19px; color: #a8a8a8; }
.btn-color { margin-left: 21px; font-size: 30px; }
.c-color { margin-left: 22px; color: #a8a8a8; }
.para-left { width: 334px; flex: none; }
.para-left .caret, .para-right .caret { color: #a8a8a8; }
.para-row1 {
  display: grid;
  grid-template-columns: 73px 50px 28px 46px 46px 48px 16px;
  height: 46px;
  margin: 14px 0 0 17px;
}
.bullets {
  background: #c6c6c6;
  border: 3px solid #848484;
  display: flex;
  align-items: center;
  justify-content: center;
}
.num { font-size: 11px; fill: #a8a8a8; }
.para-row2 {
  display: grid;
  grid-template-columns: 46px 46px 46px 47px 2px 56px 19px;
  height: 46px;
  margin: 14px 0 0 15px;
  align-items: center;
}
.para-row2 .vsep { height: 42px; }
.para-right { margin-top: -2px; }
.para-right .row { gap: 12px; padding-left: 6px; }
.big-a { font-size: 24px; fill: #a8a8a8; }

/* drawing group */
.gallery {
  flex: none;
  display: flex;
  width: 276px;
  height: 124px;
  margin: 4px 0 0 18px;
  background: #fff;
  border: 3px solid #d4d4d4;
}
.shapes {
  width: 241px;
  padding: 0 0 0 1px;
  display: grid;
  grid-template-columns: repeat(6, 40px);
  grid-auto-rows: 39px;
  align-items: center;
  justify-items: center;
}
.shapes svg { width: 30px; height: 30px; }
.ga { font-size: 14px; fill: #2f6fb3; }
.gal-scroll { flex: 1; display: flex; flex-direction: column; border-left: 1px solid #d4d4d4; }
.gal-btn { flex: 1; display: flex; flex-direction: column; align-items: center; justify-content: center; gap: 2px; }
.gal-btn + .gal-btn { border-top: 2px solid #d4d4d4; }
.gal-btn.off { background: #e4e4e4; }
.gal-btn b { display: block; width: 10px; height: 2px; background: #555; }
.up.grey { border-bottom-color: #bbb; }
.down.dark { border-top-color: #555; }
.arrange { width: 80px; margin-left: 12px; }
.quick { width: 78px; margin-left: 15px; }
.disabled-text, .disabled-text .caret { color: #a8a8a8; }
.shape-tools { margin: -1px 0 0 14px; }
.rep-ab { font-size: 18px; fill: #8a5dbb; }
.rep-ac { font-size: 18px; fill: #2f6fb3; }
.rep-caret { margin-left: 16px; }
.g-editing .stack { margin-left: 21px; }
.collapse { margin: 157px 0 0 130px; }

/* slide sorter pane */
.workspace { flex: 1; min-height: 0; display: flex; }
.thumbs { width: 388px; flex: none; display: flex; border-right: 2px solid #c6c6c6; }
.thumb-list { width: 349px; padding-top: 26px; display: flex; flex-direction: column; gap: 40px; }
.thumb-row { display: flex; align-items: flex-start; height: 137px; }
.thumb-num { width: 40px; margin: -10px 30px 0 0; text-align: right; font-size: 31px; line-height: 36px; color: #444; }
.current .thumb-num { color: #c8432a; }
.thumb {
  width: 241px;
  height: 137px;
  background: #fff;
  border: 2px solid #c6c6c6;
}
.current .thumb { outline: 8px solid #a82a1a; border-color: #e4e4e4; }
.mini text { font-family: "Liberation Serif", serif; font-size: 3.4px; fill: #666; }
.mini.lg text { font-size: 5.6px; fill: #555; }
.mini text.b { fill: #000; font-weight: 700; }
.mini text.w { fill: #fbe9d9; font-size: 5px; }
.mini text.w.xs { font-size: 3.6px; }
.mini text.w.md { font-size: 6.5px; }
.mini text.u { text-decoration: underline; fill: #222; }
.mini-title { font-family: "Liberation Serif", serif; font-size: 7px; fill: #fbe9d9; }
.mini-title.sm { font-size: 6px; }
.mini-title.sans { font-family: "Noto Sans", sans-serif; font-size: 6px; }
.mini-head { font-family: "Liberation Serif", serif; font-size: 6.6px; fill: #444; }

.vscroll { width: 33px; flex: none; display: flex; flex-direction: column; background: #dadada; }
.left-scroll { height: 1078px; }
.sb-btn {
  height: 33px;
  flex: none;
  display: flex;
  align-items: center;
  justify-content: center;
  background: #fff;
  border: 1px solid #c0c0c0;
}
.sb-btn.end { margin-top: auto; }
.sb-thumb { height: 96px; margin-top: 112px; flex: none; background: #fff; border: 1px solid #ababab; }
.up.grey.lg { border-left-width: 9px; border-right-width: 9px; border-bottom: 9px solid #7a7a7a; }
.down.grey.lg { border-left-width: 9px; border-right-width: 9px; border-top: 9px solid #7a7a7a; }

.right-scroll { position: relative; height: 971px; margin-right: 1px; }
.right-scroll .sb-thumb { height: 34px; margin-top: 124px; }
.page-btns {
  position: absolute;
  top: 980px;
  left: 7px;
  display: flex;
  flex-direction: column;
  gap: 14px;
}

/* slide */
.editor { flex: 1; min-width: 0; padding: 10px 0 0 134px; }
.slide {
  width: 1870px;
  height: 1052px;
  padding: 71px 69px 0 68px;
  background: #fff;
  border: 1px solid #d4d4d4;
  font-family: "Liberation Serif", serif;
  color: #000;
}
.accent-bars { display: flex; gap: 14px; height: 14px; }
.accent-bars i { flex: 1; }
.a1 { background: #e48312; }
.a2 { background: #bd582c; }
.a3 { background: #9b8357; }
.slide-title {
  height: 181px;
  margin: 10px 0 0;
  padding: 0 0 22px 50px;
  display: flex;
  align-items: flex-end;
  background: #e48312;
  color: #fbe9d9;
  font-size: 54.5px;
  font-weight: 400;
  line-height: 60px;
}
.block-head {
  margin: 45px 0 15px;
  padding-left: 224px;
  height: 60px;
  font-size: 54.5px;
  font-weight: 400;
  line-height: 60px;
}
.block-head.first { margin-top: 61px; }
.process { position: relative; width: 1336px; height: 232px; margin-left: 203px; }
.process-bg { position: absolute; left: 0; top: 0; width: 1336px; height: 232px; }
.process-box {
  position: relative;
  background: #fff;
  border: 3px solid #e48312;
  font-size: 35px;
  white-space: nowrap;
}
.box-one { width: 1237px; height: 160px; top: 36px; margin-left: 11px; padding-left: 7px; line-height: 50px; }
.box-two { width: 1252px; height: 184px; top: 23px; margin-left: 3px; padding: 11px 0 0 8px; line-height: 51px; }
.bp { display: flex; align-items: center; }
.arrow { width: 28px; height: 22px; }
.tight { margin-left: 5px; }
.wide { margin-left: 12px; }
.wider { margin-left: 14px; }
.flush { margin-left: 3px; }
.squiggle { text-decoration: underline wavy #e0453a 1px; text-underline-offset: 3px; }

/* status bar */
.statusbar {
  position: relative;
  height: 44px;
  flex: none;
  display: flex;
  align-items: center;
  padding-top: 1px;
  background: #f2f2f2;
  border-top: 2px solid #d2d2d2;
  border-bottom: 3px solid #3a3a3a;
  font-size: 19.7px;
  color: #444;
}
.st-slide { margin-left: 15px; }
.st-notes { margin-left: 35px; }
.st-lang { margin-left: 37px; }
.st-access { margin-left: 31px; }
.st-acc { margin-left: 5px; }
.views { display: flex; margin: -1px 0 -1px auto; align-self: stretch; }
.view { width: 80px; display: flex; align-items: center; justify-content: center; }
.view.on { background: #c6c6c6; }
.zoom-slider { margin-left: 6px; }
.zoom-pct { width: 75px; text-align: center; }
.st-fit { margin: 0 14px 0 13px; }

.share-bar {
  position: absolute;
  left: 1128px;
  top: -2px;
  height: 46px;
  display: flex;
  box-shadow: 0 0 8px rgba(0, 0, 0, .3);
  font-size: 23.6px;
  border-radius: 4px 4px 0 0;
  overflow: hidden;
}
.share-green {
  width: 514px;
  display: flex;
  align-items: center;
  padding-left: 12px;
  background: #22d65e;
  color: #123;
}
.share-text { width: 377px; margin-left: 11px; padding-left: 50px; font-weight: 600; white-space: nowrap; color: #14302a; }
.share-shield { margin-left: 14px; }
.share-red {
  width: 180px;
  display: flex;
  align-items: center;
  padding-left: 14px;
  gap: 12px;
  background: #fb3d42;
  color: #fff;
}
.stop { width: 15px; height: 15px; border-radius: 2px; background: #fff; }
```
